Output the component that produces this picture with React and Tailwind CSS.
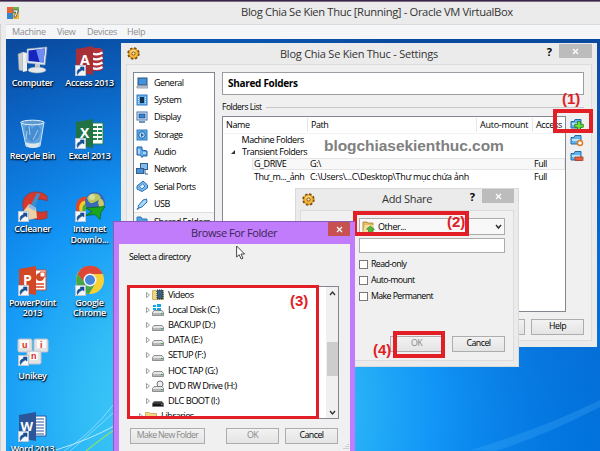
import React from 'react';

const ui = 'font-["Open_Sans","Noto_Sans",sans-serif]';

function Shortcut() {
  return (
    <g>
      <rect x="0.5" y="19.5" width="10" height="10" fill="#f4f8fc" stroke="#b9c6d4" />
      <path d="M2.500 28.500c-1-3 0-5.500 3-5.500v-2h3.500v4L7.500 24c-2 .5-3.500 2-5 4.500z" fill="#174f94" stroke="#174f94" strokeWidth=".6" />
    </g>
  );
}

const art = {
  computer: (
    <>
      <path d="M0 8l5-2v19l-4-1z" fill="#c9ced2" stroke="#8d979f" strokeWidth=".5" />
      <path d="M5 6l4 1v18l-4 1z" fill="#eef0ef" />
      <path d="M9 3l20-2-2 18-18-2z" fill="#e1e8ef" stroke="#8ea4bb" strokeWidth=".6" />
      <path d="M10.500 4.500l16.500-2-1.500 14-15-1.500z" fill="#1426bd" />
      <path d="M18 3.500l9-1-1.500 14-4-.4z" fill="#6e8cf2" />
      <path d="M17 18h5v5h-5z" fill="#c4cbd2" />
      <ellipse cx="19" cy="24" rx="9" ry="3" fill="#e6e9ea" stroke="#9aa7b1" strokeWidth=".5" />
    </>
  ),
  recycle: (
    <>
      <path d="M3 3h23l-4 24c-4 2-10 2-14 0z" fill="#7ab5e4" fillOpacity=".75" stroke="#cde4f5" />
      <path d="M7 8l4-3 3 5 5-5 4 6-3 8-6 4-6-5z" fill="#3c83cc" fillOpacity=".7" />
      <path d="M9 12l-1 8m12-9l-5 10M11 7l1 9" stroke="#e5f3fd" strokeOpacity=".6" />
      <path d="M8 23c4 2 10 2 14 0l-.6 4c-4 2-9 2-12.800 0z" fill="#dde7ec" />
      <ellipse cx="14.500" cy="3.500" rx="11.500" ry="2.300" fill="#5d9ad2" stroke="#e5f1fa" />
    </>
  ),
  access: (
    <>
      <path d="M17 5h10v4H17zM17 10h11v4H17zM17 15h11v4H17zM17 20h10v4H17z" fill="#fff" />
      <path d="M17 2h8q3 1 3 3v18q-1 2-4 2h-7z" fill="#b3313b" />
      <path d="M17 7.500q6 2 10.500-1M17 12.500q6 2 10.500-1M17 17.500q6 2 10.500-1M17 22q6 2 10.500-1" stroke="#fff" strokeWidth="2.200" fill="none" />
      <path d="M1 3l17-3v29L1 26z" fill="#a72f38" />
      <text x="5" y="19" fontSize="14" fontWeight="700" fill="#fff" fontFamily="Open Sans">A</text>
      <Shortcut />
    </>
  ),
  excel: (
    <>
      <path d="M16 4h12v21H16z" fill="#fff" stroke="#21804b" />
      <path d="M18 7h4v2h-4zm5 0h4v2h-4zm-5 4h4v2h-4zm5 0h4v2h-4zm-5 4h4v2h-4zm5 0h4v2h-4zm-5 4h4v2h-4zm5 0h4v2h-4z" fill="#20824b" />
      <path d="M1 3l17-3v29L1 26z" fill="#217346" />
      <text x="5" y="19" fontSize="14" fontWeight="700" fill="#fff" fontFamily="Open Sans">X</text>
      <Shortcut />
    </>
  ),
  ccleaner: (
    <>
      <path d="M29 4C21-3 7-1 5 10c-2 12 9 21 24 16v-7c-8 3-14 0-14-6 0-5 6-8 14-4z" fill="#d5382d" stroke="#a6291f" strokeWidth=".6" />
      <path d="M19 1l3 1-5 13-4-2z" fill="#3e8dcc" />
      <path d="M11 12l7 4 1 10-9 2-6-7z" fill="#ecd2a8" />
      <path d="M12 12l6 4-1 3-7-4z" fill="#8ebbe0" />
      <Shortcut />
    </>
  ),
  idm: (
    <>
      <path d="M2 21C-2 9 6 2 15 6l-1 4C7 8 5 14 8 22z" fill="#db4a2a" />
      <path d="M5 20C2 12 8 7 14 9l-1 3c-4-1-5 2-4 8z" fill="#f4cc2c" />
      <path d="M8 20C6 15 9 11 13 12l1 3c-3 0-3 2-3 5z" fill="#4cae3a" />
      <circle cx="20" cy="10" r="10" fill="#3869b8" />
      <path d="M12 6c4-6 11-5 13-2s-2 4-5 6-6 2-8-4z" fill="#b9c75b" />
      <path d="M25 6c5 3 5 8 1 11-3-3-4-8-1-11z" fill="#c9cb62" />
      <circle cx="17" cy="5" r="3" fill="#fff" fillOpacity=".4" />
      <path d="M30 14.500L11 16l6 3.500-6 4 9-1 5 5 1-7z" fill="#1ca51c" stroke="#0b5e18" strokeWidth=".7" />
      <Shortcut />
    </>
  ),
  powerpoint: (
    <>
      <path d="M15 4h13v20H15z" fill="#fff" stroke="#d24726" />
      <circle cx="22" cy="11" r="4" fill="#d24726" />
      <path d="M22 11V6h5v5z" fill="#fff" stroke="#d24726" />
      <path d="M18 18h8m-8 3h8" stroke="#d24726" strokeWidth="1.500" />
      <path d="M1 3l17-3v29L1 26z" fill="#d24726" />
      <text x="5" y="19" fontSize="14" fontWeight="700" fill="#fff" fontFamily="Open Sans">P</text>
      <Shortcut />
    </>
  ),
  chrome: (
    <>
      <circle cx="15" cy="14" r="14" fill="#f9cf36" />
      <path d="M2.500 8A14 14 0 0 1 28 8H15l-6 9z" fill="#dd4735" />
      <path d="M2.500 8A14 14 0 0 0 14 28l6-10-10-1z" fill="#45a64a" />
      <circle cx="15" cy="14" r="6.500" fill="#f5f5f5" />
      <circle cx="15" cy="14" r="5" fill="#4687d8" />
      <Shortcut />
    </>
  ),
  unikey: (
    <>
      <rect x="0" y="0" width="14" height="13" rx="1.500" fill="#e3e3e3" stroke="#bcc4cb" />
      <rect x="16" y="0" width="14" height="13" rx="1.500" fill="#e3e3e3" stroke="#bcc4cb" />
      <rect x="9" y="12" width="14" height="13" rx="1.500" fill="#e3e3e3" stroke="#bcc4cb" />
      <path d="M2 1h9v8H2zM19 1h9v8h-9zM12 13h8v8h-8z" fill="#fafafa" />
      <g fontSize="9" fontWeight="700" fill="#e02b20" fontFamily="Liberation Sans">
        <text x="4" y="8.500">u</text>
        <text x="22" y="8.500">i</text>
        <text x="13" y="20">n</text>
      </g>
      <g transform="translate(0 -3)"><Shortcut /></g>
    </>
  ),
  word: (
    <>
      <path d="M16 4h12v20H16z" fill="#fff" stroke="#2b579a" />
      <path d="M18 7h8m-8 3h8m-8 3h8m-8 3h8m-8 3h8m-8 3h8" stroke="#2b579a" />
      <path d="M1 3l17-3v29L1 26z" fill="#2b579a" />
      <text x="2.500" y="18.500" fontSize="13" fontWeight="700" fill="#fff" fontFamily="Open Sans">W</text>
      <Shortcut />
    </>
  ),
};

const shortcuts = [
  ['computer', 'Computer'], ['access', 'Access 2013'],
  ['recycle', 'Recycle Bin'], ['excel', 'Excel 2013'],
  ['ccleaner', 'CCleaner'], ['idm', 'Internet\nDownlo...'],
  ['powerpoint', 'PowerPoint\n2013'], ['chrome', 'Google\nChrome'],
  ['unikey', 'Unikey'], null,
  ['word', 'Word 2013'],
];

function Desktop() {
  return (
    <div className="relative min-h-0 flex-1 overflow-hidden bg-[#0b55ad]">
      <svg className="absolute inset-0" width="594" height="412">
        <defs>
          <linearGradient id="sky" x1="0" y1="0" x2="0" y2="1">
            <stop offset="0" stopColor="#0a4a9e" />
            <stop offset=".25" stopColor="#0c59b8" />
            <stop offset=".55" stopColor="#0a6bd2" />
            <stop offset="1" stopColor="#0072dc" />
          </linearGradient>
          <radialGradient id="glow" gradientUnits="userSpaceOnUse" cx="200" cy="370" r="410">
            <stop offset="0" stopColor="#52d8f8" />
            <stop offset=".3" stopColor="#33c0f8" stopOpacity=".95" />
            <stop offset=".55" stopColor="#149cfb" stopOpacity=".88" />
            <stop offset="1" stopColor="#0679e6" stopOpacity="0" />
          </radialGradient>
        </defs>
        <rect width="594" height="412" fill="url(#sky)" />
        <rect width="594" height="412" fill="url(#glow)" />
        <path d="M465 411Q540 388 594 361v7Q540 396 490 412z" fill="#4ab2fa" fillOpacity=".25" />
        <g fill="none" stroke="#d8f6ff">
          <path d="M58 412Q85 395 108 365" strokeOpacity=".5" />
          <path d="M64 412Q90 390 108 373" strokeOpacity=".5" />
          <path d="M50 411Q85 400 108 387" strokeOpacity=".8" />
          <path d="M80 412Q95 400 108 391" stroke="#86dd7a" strokeWidth="1.500" />
        </g>
      </svg>
      <div className={`relative -ml-[2px] grid w-[114px] auto-rows-[73.200px] grid-cols-2 pt-[7px] ${ui}`}>
        {shortcuts.map((s, i) => s ? (
          <div key={i} className="flex flex-col items-center">
            <svg width="30" height="30" viewBox="0 0 30 30" className="shrink-0 overflow-visible">{art[s[0]]}</svg>
            <div className="mt-[2px] whitespace-pre text-center text-[9px] leading-[10.800px] font-semibold tracking-[-0.300px] text-white [text-shadow:0_1px_2px_#000,1px_1px_1px_#001c44]">{s[1]}</div>
          </div>
        ) : <div key={i} />)}
      </div>
    </div>
  );
}

function Gear() {
  return (
    <svg width="13" height="13" viewBox="0 0 13 13" className="shrink-0">
      <circle cx="6.500" cy="6.500" r="5.200" fill="#f3b431" stroke="#7b4b0c" strokeWidth="2" strokeDasharray="2.400 1.680" />
      <circle cx="6.500" cy="6.500" r="4.600" fill="#f4b83a" stroke="#b87514" strokeWidth=".6" />
      <path d="M3.500 5.500q2-3 5-1" stroke="#ffe7a0" strokeWidth="1.200" fill="none" />
      <circle cx="6.500" cy="6.500" r="1.600" fill="#fff2cc" stroke="#87500b" />
    </svg>
  );
}

function Cross() {
  return <svg width="7" height="7" viewBox="0 0 7 7"><path d="M1 1l5 5m0-5L1 6" stroke="#fff" strokeWidth="1.200" /></svg>;
}

function Btn({ children, className = '' }) {
  return <div className={`flex h-[16px] shrink-0 items-center justify-center border border-[#adadad] bg-gradient-to-b from-[#f2f2f2] to-[#e4e4e4] text-[8.800px] tracking-[-0.500px] whitespace-nowrap ${className}`}>{children}</div>;
}

const glyphs = [
  <><rect x="2" y="1" width="9" height="7" fill="#3f94e0" stroke="#37506e" /><path d="M1 9h11v2H1z" fill="#d5dce4" stroke="#5b6c7e" strokeWidth=".6" /></>,
  <><rect x="1" y="1" width="10" height="10" fill="#66b0ef" stroke="#317ac1" /><rect x="4" y="3" width="4" height="6" fill="#12334f" /><path d="M2.500 3v7M9.500 3v7" stroke="#c8e5ff" strokeDasharray="1 1" /></>,
  <><rect x="1" y="1" width="10" height="8" fill="#d9eaf9" stroke="#4275ad" /><rect x="3" y="3" width="6" height="4" fill="#3384db" stroke="#203e72" strokeWidth=".7" /><path d="M3 11h6" stroke="#456d98" strokeWidth="1.500" /></>,
  <><rect x="1" y="1" width="10" height="10" fill="#5aa9ea" stroke="#327cbd" /><circle cx="6" cy="6" r="3.300" fill="#b8ddf8" stroke="#1e63a5" /><path d="M5 4l3 2-3 2z" fill="#2465ab" /></>,
  <><path d="M1 1h5v3l5 1v5H7l-1 1.500L4 9H1z" fill="#5ba8ea" stroke="#245e9d" /><path d="M2 3h2v5H2zM7 6h3v2H7z" fill="#a9d6f8" /></>,
  <><rect x="4.500" y=".5" width="7" height="6" fill="#84bded" stroke="#315f8f" /><rect x=".5" y="5.500" width="7" height="5" fill="#4a91d8" stroke="#315f8f" /><path d="M9 7v4h3" stroke="#315f8f" fill="none" /></>,
  <><path d="M1 6l6-5 4.500 4v3L6 11.500 1 9z" fill="#76b9f0" stroke="#2a6eae" /><path d="M3.500 6.500l3-2.500 2.500 2-3 3z" fill="#e1f3ff" stroke="#3d83be" /></>,
  <><path d="M2 8l5-6 3.500-1L11 4l-5 5-3 1z" fill="#a5d6f8" stroke="#2c72b4" /><path d="M1 11.500l2-2" stroke="#2c72b4" strokeWidth="1.500" /></>,
  <path d="M1 3V1h4l1 2h5v8H1z" fill="#4da1e5" stroke="#2c76b9" />,
];
const categories = ['General', 'System', 'Display', 'Storage', 'Audio', 'Network', 'Serial Ports', 'USB', 'Shared Folders'];

function FolderTool({ kind }) {
  return (
    <svg width="14" height="13" viewBox="0 0 14 13" className="shrink-0">
      <path d="M1 3.500V10h10V1.500H5l-1 2z" fill="#62b2ec" stroke="#226ca9" />
      <path d="M2 5h8v2H2z" fill="#bfe3f9" />
      {kind === 0 && <path d="M7.500 3.500h3v2.800h2.800v3h-2.800V12h-3V9.300H4.700v-3h2.800z" fill="#6be03a" stroke="#237911" strokeWidth=".8" />}
      {kind === 1 && <circle cx="10" cy="9" r="2.500" fill="#fff" stroke="#e07a20" strokeWidth="1.500" />}
      {kind === 2 && <rect x="5" y="7" width="8" height="3.500" fill="#e75e3d" stroke="#a92f19" strokeWidth=".7" />}
    </svg>
  );
}

function SettingsWindow() {
  return (
    <div className={`absolute left-[121px] top-[43px] flex h-[304px] w-[476px] flex-col bg-[#ebebeb] px-[5px] pb-[6px] text-[9px] text-black ${ui}`}>
      <div className="flex h-[21px] shrink-0 items-start">
        <div className="mt-[4px] ml-[1px]"><Gear /></div>
        <div className="mt-[2px] ml-[140px] w-[160px] whitespace-nowrap text-[11px] leading-[18px] tracking-[-0.240px] text-[#333]">Blog Chia Se Kien Thuc - Settings</div>
        <div className="ml-auto flex">
          <b className="mr-[7px] text-[11px] leading-[17px]">?</b>
          <div className="mt-px flex h-[14px] w-[33px] items-center justify-center bg-[#bcbcbc]"><Cross /></div>
        </div>
      </div>
      <div className="flex min-h-0 flex-1 border border-[#dcdcdc] bg-[#f0f0f0] pt-[7px] pr-[7px] pl-[6px]">
        <div className="flex h-[239px] w-[82px] shrink-0 flex-col overflow-hidden border border-[#828790] bg-white pt-px">
          {categories.map((c, i) => (
            <div key={c} className={`flex h-[17.300px] shrink-0 items-center pl-[2px] whitespace-nowrap tracking-[-0.500px] ${i === 8 ? 'border-t border-[#dedede] bg-[#f5f5f5]' : ''}`}>
              <svg width="12" height="12" className="mr-[6px] shrink-0">{glyphs[i]}</svg>{c}
            </div>
          ))}
        </div>
        <div className="ml-[7px] flex w-[363px] flex-col">
          <div className="flex h-[23px] shrink-0 items-center border border-[#9a9da2] bg-white pl-[5px] text-[10px] font-bold tracking-[-0.300px]">Shared Folders</div>
          <div className="flex h-[21px] shrink-0 items-center pt-[3px] text-[8.500px] tracking-[-0.450px]">
            <span className="w-[44px] whitespace-nowrap">Folders List</span><span className="h-px flex-1 bg-[#c8c8c8]" />
          </div>
          <div className="flex h-[196px] shrink-0">
            <div className="w-[344px] border border-[#828790] bg-white tracking-[-0.450px]">
              <div className="flex h-[17px] items-center border-b border-[#f3f3f3]">
                <span className="w-[85px] border-r border-[#e6e6e6] pl-[3px] tracking-[-0.400px]">Name</span>
                <span className="w-[169px] border-r border-[#e6e6e6] pl-[3px]">Path</span>
                <span className="w-[56px] border-r border-[#e6e6e6] pl-[3px] whitespace-nowrap tracking-[-0.250px]">Auto-mount</span>
                <span className="pl-[3px] tracking-[-0.350px]">Access</span>
              </div>
              <div className="flex h-[12px] items-center pl-[18.500px]">Machine Folders</div>
              <div className="flex h-[12px] items-center pl-[7px]">
                <svg width="12" height="8" className="shrink-0"><path d="M5 2v4H1z" fill="#333" /></svg>Transient Folders
              </div>
              <div className="flex h-[12px] items-center">
                <div className="ml-[29px] flex h-[12px] flex-1 items-center border border-[#e5e5e5] bg-[#f8f8f8]">
                  <span className="w-[57px] pl-px">G_DRIVE</span><span className="w-[224px]">G:\</span><span>Full</span>
                </div>
              </div>
              <div className="flex h-[13px] items-center pl-[31px] whitespace-nowrap">
                <span className="w-[56px]">Thư_m..._ảnh</span><span className="w-[224px] tracking-[-0.320px]">C:\Users\...C\Desktop\Thư mục chứa ảnh</span><span>Full</span>
              </div>
            </div>
            <div className="flex flex-col gap-[3px] pt-[2px] pl-[4px]">
              <FolderTool kind={0} /><FolderTool kind={1} /><FolderTool kind={2} />
            </div>
          </div>
          <div className="mt-[7px] flex justify-end gap-[6px]">
            <Btn className="w-[53px]">Cancel</Btn><Btn className="w-[53px]">Help</Btn>
          </div>
        </div>
      </div>
    </div>
  );
}

function AddShareWindow() {
  return (
    <div className={`absolute left-[295px] top-[188px] flex h-[179px] w-[224px] flex-col border border-[#d9d9d9] bg-[#ebebeb] px-[4px] pb-[5px] text-[9px] text-black ${ui}`}>
      <div className="flex h-[21px] shrink-0 items-start">
        <div className="mt-[4px] ml-[2px]"><Gear /></div>
        <div className="mt-[1px] ml-[67px] whitespace-nowrap text-[11px] leading-[18px] tracking-[-0.300px] text-[#333]">Add Share</div>
        <div className="ml-auto flex">
          <b className="mr-[7px] text-[11px] leading-[15px]">?</b>
          <div className="flex h-[14px] w-[32px] items-center justify-center bg-[#bcbcbc]"><Cross /></div>
        </div>
      </div>
      <div className="flex flex-1 flex-col items-end border border-[#dcdcdc] bg-[#f0f0f0] pt-[7px] pr-[8px]">
        <div className="flex h-[17px] w-[146px] items-center border border-[#acacac] bg-[#f8f8f8] pl-[2px]">
          <svg width="13" height="13" viewBox="0 0 13 13" className="mr-[3px]">
            <path d="M1 2h4l1 1h5v9H1z" fill="#e6bd63" stroke="#a47b29" strokeWidth=".8" /><path d="M3 5h9l-2 7H1z" fill="#f8dda0" /><path d="M8.500 6l4 3.500-2 .5v2.500h-4v-3L4.500 9z" fill="#54b53b" stroke="#2b7e25" strokeWidth=".6" />
          </svg>
          <span className="tracking-[-0.450px]">Other...</span>
          <svg width="9" height="6" className="mr-px ml-auto"><path d="M2 1l2.500 3L7 1" fill="none" stroke="#333" strokeWidth="1.500" /></svg>
        </div>
        <div className="mt-[3px] h-[15px] w-[146px] border border-[#acacac] bg-white" />
        <div className="mt-[3px] flex w-[146px] flex-col text-[8.800px] tracking-[-0.600px]">
          {['Read-only', 'Auto-mount', 'Make Permanent'].map((l) => (
            <div key={l} className="flex h-[16.200px] items-center whitespace-nowrap"><span className="mr-[3px] h-[9px] w-[9px] border border-[#777] bg-white" />{l}</div>
          ))}
        </div>
        <div className="mt-[31px] flex w-[146px] justify-end gap-[9px]">
          <Btn className="w-[53px] text-[#888]">OK</Btn><Btn className="w-[53px]">Cancel</Btn>
        </div>
      </div>
    </div>
  );
}

function Drive({ kind }) {
  if (kind === 'video' || kind === 'library') {
    return (
      <svg width="12" height="11" className="mr-[4px] shrink-0">
        <path d="M.5 1.500h4l1 1h6v8H.5z" fill="#f1d681" stroke="#c19b3d" strokeWidth=".7" />
        {kind === 'video' ? <path d="M5 1h6v9H5z" fill="#365f85" stroke="#262f38" strokeDasharray="1 1" /> : <path d="M2 5h8v3H2z" fill="#79b6dc" />}
      </svg>
    );
  }
  return (
    <svg width="12" height="12" className="mr-[4px] shrink-0">
      {kind === 'system' && <path d="M1 1h3v2H1zM5 0h4v3H5zM1 4h3v2H1zM5 4h4v3H5z" fill="#16a5e8" />}
      {kind === 'dvd' && <circle cx="8" cy="4" r="3" fill="#eee" stroke="#777" />}
      <path d="M2 6.500h8l1.500 2v3H.5v-3z" fill={kind === 'usb' ? '#3a3a3a' : '#e4e5e6'} stroke="#666" strokeWidth=".7" />
      <path d="M1 9h10v2H1z" fill={kind === 'usb' ? '#171717' : '#b3b7ba'} />
      <path d="M9 9.500h1.500" stroke={kind === 'usb' ? '#888' : '#22a03a'} />
    </svg>
  );
}

const tree = [
  ['video', 'Videos'], ['system', 'Local Disk (C:)'], ['disk', 'BACKUP (D:)'], ['disk', 'DATA (E:)'], ['disk', 'SETUP (F:)'],
  ['disk', 'HOC TAP (G:)'], ['dvd', 'DVD RW Drive (H:)'], ['usb', 'DLC BOOT (I:)'], ['library', 'Libraries'],
];

function BrowseWindow() {
  return (
    <div className={`absolute left-[113px] top-[221px] flex h-[230px] w-[242px] flex-col border-t border-l border-[#8c5abb] bg-[#c07cfa] pr-[5px] pl-[5px] text-black ${ui}`}>
      <div className="flex h-[22px] shrink-0 items-start">
        <div className="ml-[72px] whitespace-nowrap text-[11px] leading-[21px] tracking-[-0.420px] text-[#3b2553]">Browse For Folder</div>
        <div className="ml-auto flex h-[14px] w-[22px] items-center justify-center bg-[#c75050]"><Cross /></div>
      </div>
      <div className="relative flex flex-1 flex-col bg-[#f0f0f0] pl-[9px]">
        <div className="h-[42px] pt-[7px] pl-px text-[8.800px] leading-[13px] tracking-[-0.500px]">Select a directory</div>
        <div className="flex h-[133px] w-[211px] shrink-0 border border-[#828790] bg-white">
          <div className="flex flex-1 flex-col overflow-hidden">
            {tree.map(([k, l], i) => (
              <div key={l} className={`flex h-[15.200px] shrink-0 items-center whitespace-nowrap text-[9.300px] tracking-[-0.550px] ${i === 8 ? 'pl-[8px]' : 'pl-[15px]'}`}>
                <svg width="8" height="8" className="shrink-0"><path d="M2.500 1.500L5.500 4l-3 2.500z" fill="none" stroke="#888" strokeWidth=".8" /></svg>
                <Drive kind={k} /><span>{l}</span>
              </div>
            ))}
          </div>
          <div className="flex w-[12px] flex-col items-center bg-[#f0f0f0]">
            <svg width="9" height="12"><path d="M2 8l2.500-3L7 8" fill="none" stroke="#333" strokeWidth="1.400" /></svg>
            <div className="mt-[43px] h-[34px] w-[11px] bg-[#cdcdcd]" />
            <svg width="9" height="12" className="mt-auto"><path d="M2 5l2.500 3L7 5" fill="none" stroke="#333" strokeWidth="1.400" /></svg>
          </div>
        </div>
        <div className="mt-[9px] flex w-[210px] pl-[2px]">
          <Btn className="w-[75px] tracking-[-0.800px] text-[#888]"><span className="tracking-[-0.650px]">Make New Folder</span></Btn>
          <Btn className="ml-[21px] w-[53px] text-[#888]">OK</Btn>
          <Btn className="ml-[6px] w-[53px]">Cancel</Btn>
        </div>
        <svg width="8" height="8" className="absolute right-0 bottom-0"><path d="M6 1v6M4 3v4M2 5v2" stroke="#aaa" strokeDasharray="1 1" /></svg>
      </div>
    </div>
  );
}

function Mark({ className, children }) {
  return <div className={`absolute text-[15px] leading-[16px] font-bold text-[#e02025] ${className}`}>{children}</div>;
}

export default function App() {
  return (
    <div className="relative flex h-[451px] w-[600px] flex-col overflow-hidden bg-[#ebebeb] font-['Liberation_Sans',sans-serif]">
      <div className="h-[2px] shrink-0 border-b border-[#7d6c87] bg-[#3c2449]" />
      <div className={`flex h-[21.500px] shrink-0 items-center pl-[7px] ${ui}`}>
        <svg width="12" height="12" viewBox="0 0 12 12" className="shrink-0">
          <rect width="12" height="12" fill="#d6d9dc" /><path d="M0 0h6v6H0z" fill="#e46432" /><path d="M6 0h6v6H6z" fill="#70b54b" /><path d="M0 6h6v6H0z" fill="#3186cf" /><path d="M6 6h6v6H6z" fill="#efb42f" />
          <path d="M6 3h5v1L9 10H7l2-5H6z" fill="#fff" stroke="#26354b" strokeWidth=".6" />
        </svg>
        <div className="ml-[222px] whitespace-nowrap text-[11.200px] tracking-[-0.350px] text-[#333]">Blog Chia Se Kien Thuc [Running] - Oracle VM VirtualBox</div>
      </div>
      <div className="flex min-h-0 flex-1 flex-col border-l border-[#d2d2d2] pl-[5px]">
        <div className={`flex h-[15.500px] shrink-0 items-center border-t border-[#dadada] bg-[#f5f6f7] pl-[6px] text-[9px] tracking-[-0.300px] text-[#8d8d8d] ${ui}`}>
          <span className="w-[45px]">Machine</span><span className="w-[30px]">View</span><span className="w-[40px]">Devices</span><span>Help</span>
        </div>
        <Desktop />
      </div>
      <SettingsWindow />
      <div className="absolute left-[324px] top-[137px] text-[15.500px] leading-[18px] font-bold tracking-[-0.050px] text-[#808080]">blogchiasekienthuc.com</div>
      <div className="absolute left-[553px] top-[109px] h-[24px] w-[40px] border-4 border-[#e21e26]" />
      <AddShareWindow />
      <div className="absolute left-[353px] top-[211px] h-[25px] w-[116px] border-4 border-[#e21e26]" />
      <div className="absolute left-[393px] top-[331px] h-[27px] w-[52px] border-4 border-[#e21e26]" />
      <BrowseWindow />
      <div className="absolute left-[127px] top-[285px] h-[134px] w-[192px] border-[3.500px] border-[#e21e26]" />
      <Mark className="left-[562px] top-[91px]">(1)</Mark>
      <Mark className="left-[447px] top-[214px]">(2)</Mark>
      <Mark className="left-[290px] top-[293px]">(3)</Mark>
      <Mark className="left-[373px] top-[342px]">(4)</Mark>
      <svg width="10" height="15" viewBox="0 0 10 15" className="absolute left-[236px] top-[245px]">
        <path d="M.6 1v11l2.600-2.300 2 4.300 1.800-.8-2-4.200h3.600z" fill="#fff" stroke="#333" strokeWidth=".9" />
      </svg>
    </div>
  );
}
